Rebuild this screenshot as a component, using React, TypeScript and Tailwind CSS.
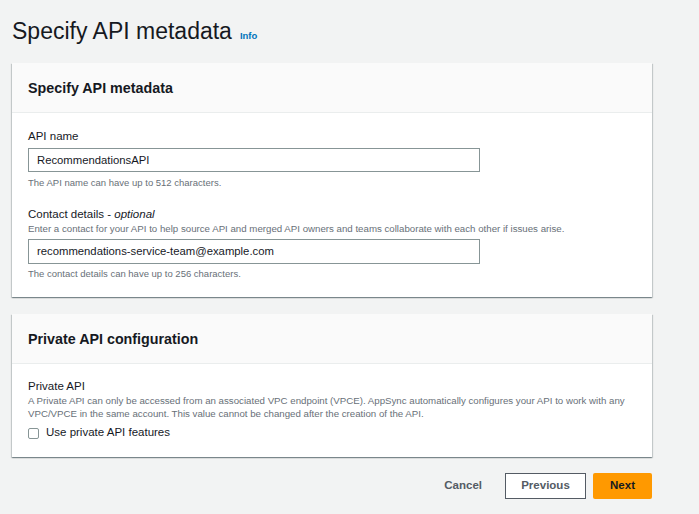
import React from "react";

const font = { fontFamily: '"Liberation Sans", Arial, sans-serif' };

export default function App() {
  return (
    <div className="min-h-[514px] w-[699px] bg-[#f2f3f3] text-[#16191f]" style={font}>
      <div className="w-[640px] ml-[12px] pt-[16px]">
        <div className="flex items-baseline h-[31px]">
          <h1 className="text-[23px] leading-[30px] font-normal text-[#16191f]">Specify API metadata</h1>
          <span className="ml-[8px] text-[9.5px] font-bold text-[#0073bb]">Info</span>
        </div>

        <div className="mt-[16px] bg-white shadow-[0_1px_1px_0_rgba(0,28,36,0.3),1px_1px_1px_0_rgba(0,28,36,0.15),-1px_1px_1px_0_rgba(0,28,36,0.15)]">
          <div className="h-[50px] bg-[#fafafa] border-b border-[#eaeded] flex items-center px-[16px]">
            <h2 className="text-[14.3px] font-bold leading-[20px]">Specify API metadata</h2>
          </div>
          <div className="px-[16px] pt-[15px] pb-[17px]">
            <div className="text-[11.5px] leading-[16px]">API name</div>
            <div className="mt-[4px] w-[452px] h-[24px] border border-[#879596] bg-white flex items-center px-[8px] text-[11.3px]">
              RecommendationsAPI
            </div>
            <div className="mt-[5px] text-[9.5px] leading-[12px] text-[#687078]">
              The API name can have up to 512 characters.
            </div>
            <div className="mt-[17px] text-[11.5px] leading-[16px]">
              Contact details - <i>optional</i>
            </div>
            <div className="text-[9.7px] leading-[13px] text-[#687078]">
              Enter a contact for your API to help source API and merged API owners and teams collaborate with each other if issues arise.
            </div>
            <div className="mt-[4px] w-[452px] h-[25px] border border-[#879596] bg-white flex items-center px-[8px] text-[11.3px]">
              recommendations-service-team@example.com
            </div>
            <div className="mt-[4px] text-[9.5px] leading-[12px] text-[#687078]">
              The contact details can have up to 256 characters.
            </div>
          </div>
        </div>

        <div className="mt-[17px] bg-white shadow-[0_1px_1px_0_rgba(0,28,36,0.3),1px_1px_1px_0_rgba(0,28,36,0.15),-1px_1px_1px_0_rgba(0,28,36,0.15)]">
          <div className="h-[50px] bg-[#fafafa] border-b border-[#eaeded] flex items-center px-[16px]">
            <h2 className="text-[14.3px] font-bold leading-[20px]">Private API configuration</h2>
          </div>
          <div className="px-[16px] pt-[14px] pb-[16px]">
            <div className="text-[11.5px] leading-[16px]">Private API</div>
            <div className="text-[9.7px] leading-[13px] text-[#687078] pr-[6px]">
              A Private API can only be accessed from an associated VPC endpoint (VPCE). AppSync automatically configures your API to work with any VPC/VPCE in the same account. This value cannot be changed after the creation of the API.
            </div>
            <div className="mt-[5px] flex items-center h-[16px]">
              <span className="w-[11px] h-[11px] border border-[#879596] rounded-[2px] bg-white" />
              <span className="ml-[7px] text-[11.5px]">Use private API features</span>
            </div>
          </div>
        </div>

        <div className="mt-[16px] flex justify-end items-center">
          <span className="text-[11.5px] font-bold text-[#545b64] mr-[23px]">Cancel</span>
          <button className="w-[81px] h-[26px] border border-[#545b64] bg-white text-[11.5px] font-bold text-[#545b64]">
            Previous
          </button>
          <button className="ml-[7px] w-[59px] h-[26px] bg-[#ff9900] text-[11.5px] font-bold text-[#16191f] rounded-[2px]">
            Next
          </button>
        </div>
      </div>
    </div>
  );
}
